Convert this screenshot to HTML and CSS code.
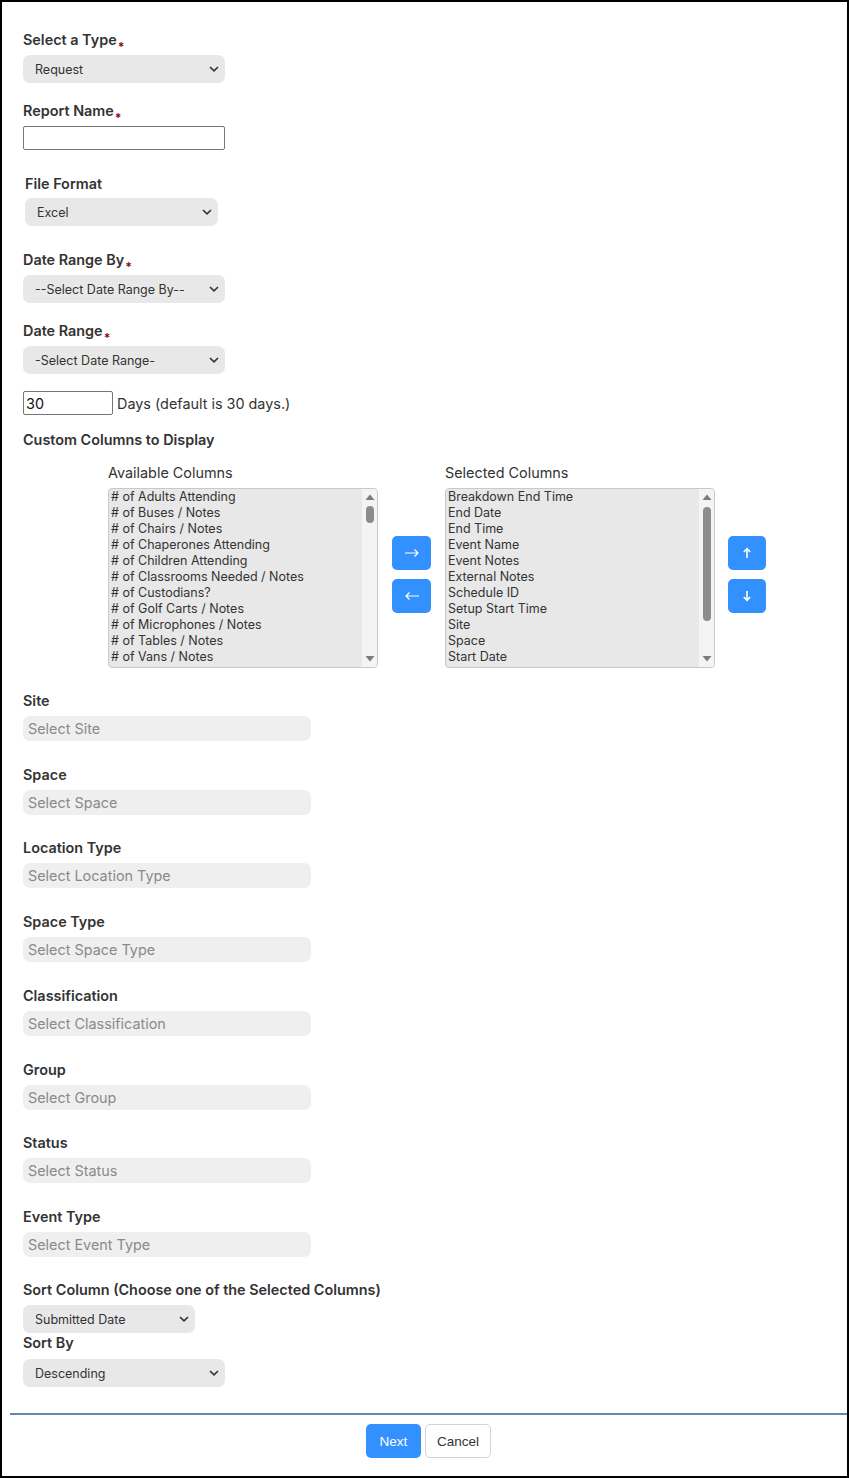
FILE: index.html
```html
<!DOCTYPE html>
<html>
<head>
<meta charset="utf-8">
<title>Report</title>
<link rel="stylesheet" href="styles.css">
</head>
<body>
<div class="page">
  <div class="form">
    <div class="field">
      <label class="lbl">Select a Type<span class="req">*</span></label>
      <select class="sel w202"><option>Request</option></select>
    </div>

    <div class="field g17">
      <label class="lbl">Report Name<span class="req">*</span></label>
      <input class="txt w202" type="text">
    </div>

    <div class="field g23 shift2">
      <label class="lbl">File Format</label>
      <select class="sel w193 m5"><option>Excel</option></select>
    </div>

    <div class="field g23">
      <label class="lbl">Date Range By<span class="req">*</span></label>
      <select class="sel w202"><option>--Select Date Range By--</option></select>
    </div>

    <div class="field g17">
      <label class="lbl">Date Range<span class="req">*</span></label>
      <select class="sel w202"><option>-Select Date Range-</option></select>
    </div>

    <div class="days g17">
      <input class="txt w90 num" type="text" value="30">
      <span class="days-text">Days (default is 30 days.)</span>
    </div>

    <div class="field g14">
      <label class="lbl">Custom Columns to Display</label>
    </div>

    <div class="columns">
      <div class="col">
        <div class="col-title">Available Columns</div>
        <div class="listbox">
          <div class="items">
            <div class="item"># of Adults Attending</div>
            <div class="item"># of Buses / Notes</div>
            <div class="item"># of Chairs / Notes</div>
            <div class="item"># of Chaperones Attending</div>
            <div class="item"># of Children Attending</div>
            <div class="item"># of Classrooms Needed / Notes</div>
            <div class="item"># of Custodians?</div>
            <div class="item"># of Golf Carts / Notes</div>
            <div class="item"># of Microphones / Notes</div>
            <div class="item"># of Tables / Notes</div>
            <div class="item"># of Vans / Notes</div>
            <div class="item"># of Volunteers</div>
          </div>
          <div class="sbar">
            <div class="sarrow"><svg width="10" height="8" viewBox="0 0 10 8"><path d="M0.5 7 L5 1.5 L9.5 7 Z" fill="#7b7b7b"/></svg></div>
            <div class="strack"><div class="thumb t-small"></div></div>
            <div class="sarrow"><svg width="10" height="8" viewBox="0 0 10 8"><path d="M0.5 1 L5 6.5 L9.5 1 Z" fill="#7b7b7b"/></svg></div>
          </div>
        </div>
      </div>

      <div class="movebtns">
        <button class="ibtn"><svg width="16" height="10" viewBox="0 0 16 10"><path d="M1 5 H14 M10.5 1.5 L14 5 L10.5 8.5" stroke="#fff" stroke-width="1.2" fill="none"/></svg></button>
        <button class="ibtn"><svg width="16" height="10" viewBox="0 0 16 10"><path d="M15 5 H2 M5.5 1.5 L2 5 L5.5 8.5" stroke="#fff" stroke-width="1.2" fill="none"/></svg></button>
      </div>

      <div class="col">
        <div class="col-title">Selected Columns</div>
        <div class="listbox">
          <div class="items">
            <div class="item">Breakdown End Time</div>
            <div class="item">End Date</div>
            <div class="item">End Time</div>
            <div class="item">Event Name</div>
            <div class="item">Event Notes</div>
            <div class="item">External Notes</div>
            <div class="item">Schedule ID</div>
            <div class="item">Setup Start Time</div>
            <div class="item">Site</div>
            <div class="item">Space</div>
            <div class="item">Start Date</div>
            <div class="item">Start Time</div>
          </div>
          <div class="sbar">
            <div class="sarrow"><svg width="10" height="8" viewBox="0 0 10 8"><path d="M0.5 7 L5 1.5 L9.5 7 Z" fill="#7b7b7b"/></svg></div>
            <div class="strack"><div class="thumb t-big"></div></div>
            <div class="sarrow"><svg width="10" height="8" viewBox="0 0 10 8"><path d="M0.5 1 L5 6.5 L9.5 1 Z" fill="#7b7b7b"/></svg></div>
          </div>
        </div>
      </div>

      <div class="movebtns order">
        <button class="ibtn ibtn-s"><svg width="10" height="12" viewBox="0 0 10 12"><path d="M5 11 V2 M1.8 5 L5 1.6 L8.2 5" stroke="#fff" stroke-width="1.6" fill="none"/></svg></button>
        <button class="ibtn ibtn-s"><svg width="10" height="12" viewBox="0 0 10 12"><path d="M5 1 V10 M1.8 7 L5 10.4 L8.2 7" stroke="#fff" stroke-width="1.6" fill="none"/></svg></button>
      </div>
    </div>

    <div class="field g22">
      <label class="lbl">Site</label>
      <input class="pick" type="text" placeholder="Select Site">
    </div>
    <div class="field g23">
      <label class="lbl">Space</label>
      <input class="pick" type="text" placeholder="Select Space">
    </div>
    <div class="field g22">
      <label class="lbl">Location Type</label>
      <input class="pick" type="text" placeholder="Select Location Type">
    </div>
    <div class="field g23">
      <label class="lbl">Space Type</label>
      <input class="pick" type="text" placeholder="Select Space Type">
    </div>
    <div class="field g23">
      <label class="lbl">Classification</label>
      <input class="pick" type="text" placeholder="Select Classification">
    </div>
    <div class="field g23">
      <label class="lbl">Group</label>
      <input class="pick" type="text" placeholder="Select Group">
    </div>
    <div class="field g22">
      <label class="lbl">Status</label>
      <input class="pick" type="text" placeholder="Select Status">
    </div>
    <div class="field g23">
      <label class="lbl">Event Type</label>
      <input class="pick" type="text" placeholder="Select Event Type">
    </div>

    <div class="field g22">
      <label class="lbl">Sort Column (Choose one of the Selected Columns)</label>
      <select class="sel w172"><option>Submitted Date</option></select>
    </div>
    <div class="field gm1">
      <label class="lbl">Sort By</label>
      <select class="sel w202 m7"><option>Descending</option></select>
    </div>
  </div>

  <div class="footer">
    <div class="rule"></div>
    <div class="actions">
      <button class="btn btn-primary">Next</button>
      <button class="btn btn-default">Cancel</button>
    </div>
  </div>
</div>
</body>
</html>
```

FILE: styles.css
```css
* { box-sizing: border-box; }

html, body {
  margin: 0;
  padding: 0;
  background: #fff;
}

body {
  font-family: Inter, "Noto Sans", "DejaVu Sans", sans-serif;
  color: #333;
}

.page {
  width: 849px;
  height: 1478px;
  border: 2px solid #000;
  display: flex;
  flex-direction: column;
}

.form {
  padding: 27px 0 0 21px;
}

.field {
  display: flex;
  flex-direction: column;
  align-items: flex-start;
}

.g14 { margin-top: 14px; }
.g17 { margin-top: 17px; }
.g22 { margin-top: 22px; }
.g23 { margin-top: 23px; }
.gm1 { margin-top: -1px; }
.shift2 { padding-left: 2px; }

.lbl {
  display: block;
  font-size: 14.4px;
  line-height: 22px;
  height: 20px;
  font-weight: 600;
  color: #333;
  white-space: nowrap;
}

.req {
  display: inline-block;
  color: #8b0a0a;
  font-size: 12px;
  line-height: 0;
  font-weight: 700;
  vertical-align: -6px;
  margin-left: 1px;
}

.sel {
  appearance: none;
  -webkit-appearance: none;
  display: block;
  margin-top: 6px;
  height: 28px;
  border: none;
  border-radius: 7px;
  background-color: #e8e8e8;
  background-image: url("data:image/svg+xml;utf8,<svg xmlns='http://www.w3.org/2000/svg' width='10' height='6' viewBox='0 0 10 6'><path d='M1 1 L5 4.8 L9 1' stroke='%23333' stroke-width='1.6' fill='none'/></svg>");
  background-repeat: no-repeat;
  background-position: right 6px center;
  padding: 0 20px 0 12px;
  font-family: Inter, "Noto Sans", sans-serif;
  font-size: 12.5px;
  color: #333;
  outline: none;
}

.m5 { margin-top: 5px; }
.m7 { margin-top: 7px; }

.w202 { width: 202px; }
.w193 { width: 193px; }
.w172 { width: 172px; }
.w90 { width: 90px; }

.txt {
  display: block;
  margin-top: 6px;
  height: 24px;
  border: 1px solid #767676;
  border-radius: 2px;
  background: #fff;
  font-family: Inter, "Noto Sans", sans-serif;
  font-size: 14.4px;
  color: #111;
  padding: 0 2px;
  outline: none;
}

.days {
  display: flex;
  align-items: center;
  gap: 4px;
}

.days .txt { margin-top: 0; }

.days-text {
  font-size: 14.4px;
  color: #333;
}

.columns {
  display: flex;
  align-items: flex-start;
  margin-top: 13px;
  padding-left: 85px;
}

.col {
  display: flex;
  flex-direction: column;
}

.col-title {
  font-size: 14.4px;
  line-height: 22px;
  height: 20px;
  color: #333;
}

.listbox {
  margin-top: 6px;
  width: 270px;
  height: 180px;
  border: 1px solid #c9c9c9;
  border-radius: 4px;
  background: #e8e8e8;
  display: flex;
  overflow: hidden;
}

.items {
  flex: 1;
  overflow: hidden;
  padding: 0 0 0 2px;
}

.item {
  font-size: 12.5px;
  line-height: 16px;
  height: 16px;
  color: #333;
  white-space: nowrap;
}

.sbar {
  width: 15px;
  display: flex;
  flex-direction: column;
  background: #f4f4f4;
}

.sarrow {
  height: 16px;
  display: flex;
  align-items: center;
  justify-content: center;
}

.strack {
  flex: 1;
  display: flex;
  flex-direction: column;
  align-items: center;
}

.thumb {
  width: 8px;
  border-radius: 4px;
  background: #8c8c8c;
  margin-top: 1px;
}

.t-small { height: 17px; }
.t-big { height: 114px; margin-top: 2px; }

.movebtns {
  display: flex;
  flex-direction: column;
  gap: 9px;
  margin: 74px 14px 0 14px;
}

.movebtns.order {
  margin: 74px 0 0 13px;
}

.ibtn {
  width: 39px;
  height: 34px;
  border: none;
  border-radius: 5px;
  background: #3391ff;
  display: flex;
  align-items: center;
  justify-content: center;
  padding: 0;
}

.ibtn-s { width: 38px; }

.pick {
  display: block;
  margin-top: 6px;
  width: 288px;
  height: 25px;
  border: none;
  border-radius: 7px;
  background: #efefef;
  padding: 0 5px;
  font-family: Inter, "Noto Sans", sans-serif;
  font-size: 14.4px;
  color: #333;
  outline: none;
}

.pick::placeholder {
  color: #8a8a8a;
  opacity: 1;
}

.footer {
  margin-top: 26px;
  padding-left: 8px;
}

.rule {
  height: 2px;
  background: #5e88b6;
}

.actions {
  display: flex;
  justify-content: center;
  gap: 4px;
  margin-top: 9px;
}

.btn {
  height: 34px;
  border-radius: 5px;
  font-family: "Liberation Sans", Arial, sans-serif;
  font-size: 13.5px;
  padding: 0;
}

.btn-primary {
  width: 55px;
  background: #3391ff;
  border: none;
  color: #fff;
}

.btn-default {
  width: 66px;
  background: #fff;
  border: 1px solid #d3d3d3;
  color: #333;
}
```
